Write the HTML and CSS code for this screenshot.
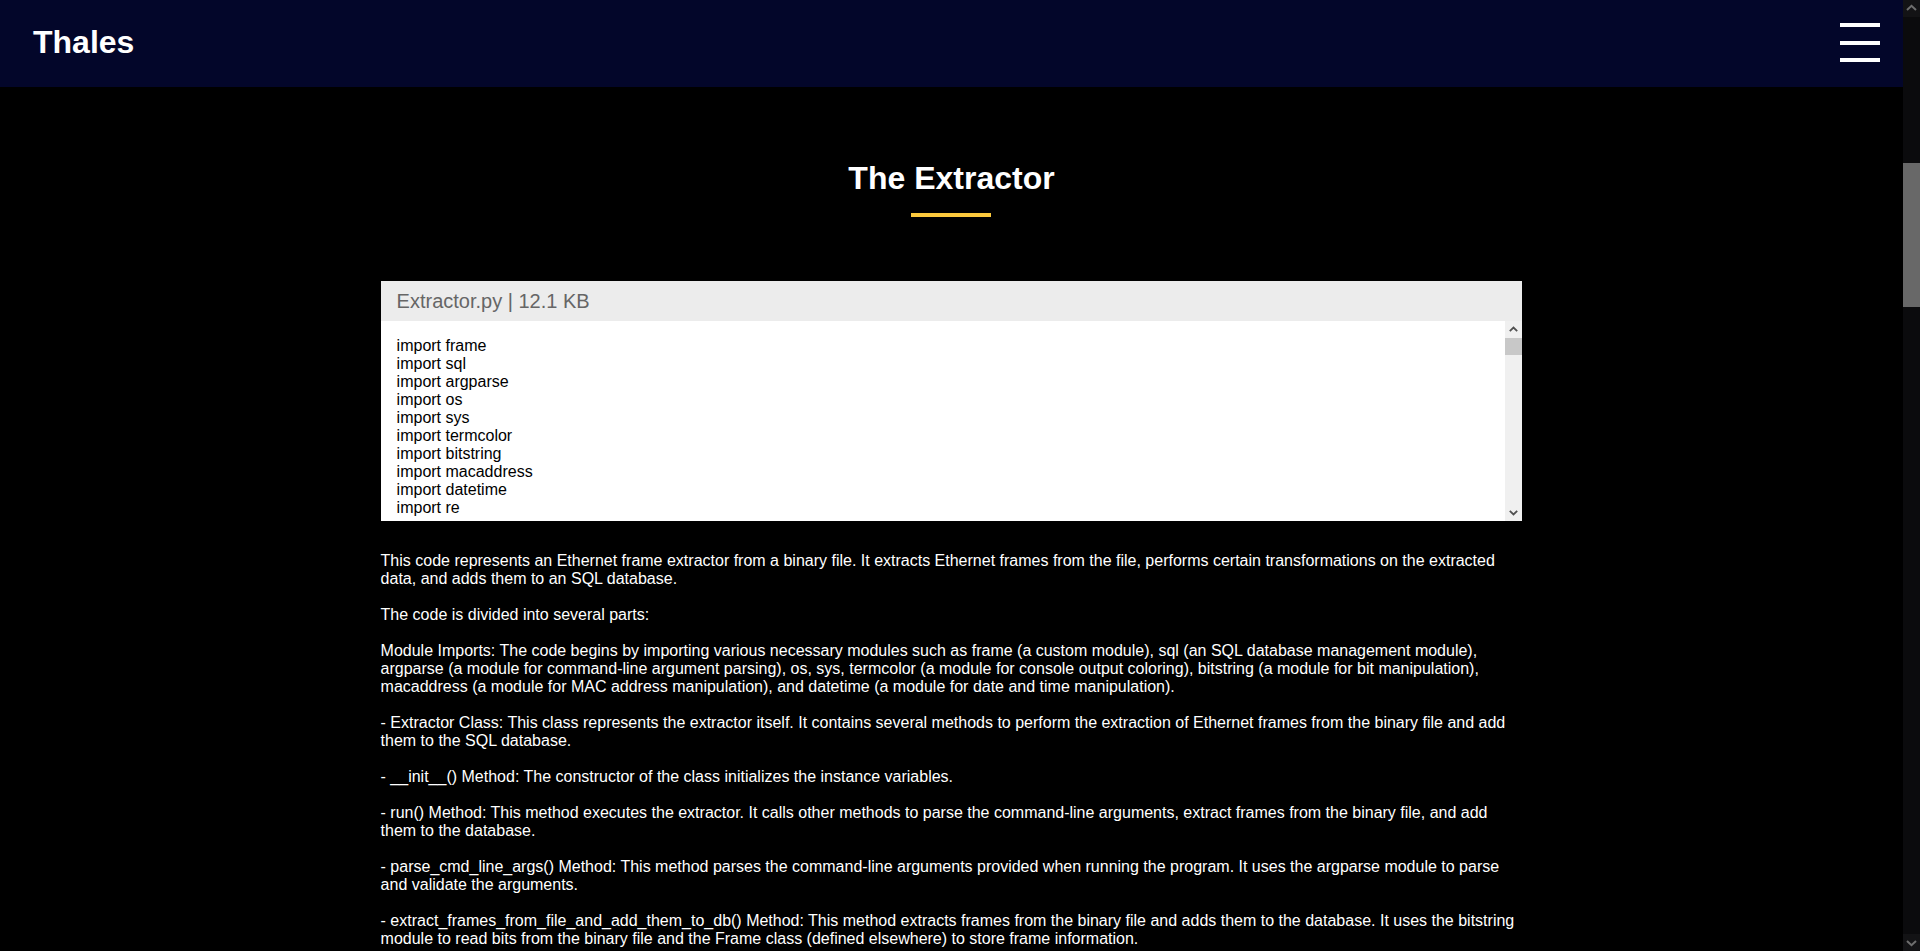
FILE: index.html
```html
<!DOCTYPE html>
<html lang="en">
<head>
<meta charset="utf-8">
<title>The Extractor - Thales</title>
<link rel="stylesheet" href="styles.css">
</head>
<body>
<div class="viewport">
  <header class="topbar">
    <div class="brand">Thales</div>
    <button class="burger" aria-label="Menu"><span></span><span></span><span></span></button>
  </header>

  <main class="page">
    <h1 class="title">The Extractor</h1>
    <div class="title-rule"></div>

    <section class="file">
      <div class="file-head">Extractor.py | 12.1 KB</div>
      <div class="code-wrap">
        <div class="code">import frame
import sql
import argparse
import os
import sys
import termcolor
import bitstring
import macaddress
import datetime
import re
</div>
        <div class="code-rail">
          <div class="crail-btn"><svg width="17" height="17" viewBox="0 0 17 17"><path d="M4.8 10.2 L8.5 6.6 L12.2 10.2" fill="none" stroke="#505050" stroke-width="1.8"/></svg></div>
          <div class="crail-track"><div class="crail-thumb"></div></div>
          <div class="crail-btn"><svg width="17" height="17" viewBox="0 0 17 17"><path d="M4.8 6.8 L8.5 10.4 L12.2 6.8" fill="none" stroke="#505050" stroke-width="1.8"/></svg></div>
        </div>
      </div>
    </section>

    <article class="desc">
      <p>This code represents an Ethernet frame extractor from a binary file. It extracts Ethernet frames from the file, performs certain transformations on the extracted data, and adds them to an SQL database.</p>
      <p>The code is divided into several parts:</p>
      <p>Module Imports: The code begins by importing various necessary modules such as frame (a custom module), sql (an SQL database management module), argparse (a module for command-line argument parsing), os, sys, termcolor (a module for console output coloring), bitstring (a module for bit manipulation), macaddress (a module for MAC address manipulation), and datetime (a module for date and time manipulation).</p>
      <p>- Extractor Class: This class represents the extractor itself. It contains several methods to perform the extraction of Ethernet frames from the binary file and add them to the SQL database.</p>
      <p>- __init__() Method: The constructor of the class initializes the instance variables.</p>
      <p>- run() Method: This method executes the extractor. It calls other methods to parse the command-line arguments, extract frames from the binary file, and add them to the database.</p>
      <p>- parse_cmd_line_args() Method: This method parses the command-line arguments provided when running the program. It uses the argparse module to parse and validate the arguments.</p>
      <p>- extract_frames_from_file_and_add_them_to_db() Method: This method extracts frames from the binary file and adds them to the database. It uses the bitstring module to read bits from the binary file and the Frame class (defined elsewhere) to store frame information.</p>
      <p>- read_mac() Method: This method reads six bytes from the bit stream and converts them into a readable MAC address using the macaddress module.</p>
      <p>Finally, the main block creates an instance of the Extractor class and calls its run() method to start the extraction.</p>
    </article>
  </main>
</div>

<div class="rail" aria-hidden="true">
  <div class="rail-btn"><svg width="17" height="17" viewBox="0 0 17 17"><path d="M4 10 L8.5 5.8 L13 10" fill="none" stroke="#6e6e6e" stroke-width="2"/></svg></div>
  <div class="rail-track"><div class="rail-thumb"></div></div>
  <div class="rail-btn"><svg width="17" height="17" viewBox="0 0 17 17"><path d="M4 7 L8.5 11.2 L13 7" fill="none" stroke="#6e6e6e" stroke-width="2"/></svg></div>
</div>
</body>
</html>
```

FILE: styles.css
```css
html {
  background: #000;
  scrollbar-width: none;
}

body {
  margin: 0;
  background: #000;
  color: #fff;
  font-family: "Liberation Sans", Arial, sans-serif;
  display: flex;
  align-items: flex-start;
}

.viewport {
  flex: 1;
  min-width: 0;
}

/* page scrollbar (drawn) */
.rail {
  flex: none;
  width: 17px;
  height: 100vh;
  position: sticky;
  top: 0;
  display: flex;
  flex-direction: column;
  background: #0b0b0d;
}

.rail-btn {
  height: 17px;
  flex: none;
  background: #131315;
}

.rail-btn svg {
  display: block;
}

.rail-track {
  flex: 1;
  padding-top: 146px;
}

.rail-thumb {
  height: 144px;
  background: #686868;
}

/* header */
.topbar {
  height: 87px;
  background: #03062a;
  display: flex;
  align-items: center;
  justify-content: space-between;
  padding: 0 23px 0 33px;
  box-sizing: border-box;
}

.brand {
  font-size: 32px;
  font-weight: bold;
  line-height: 37px;
  color: #fff;
  margin-top: -2px;
}

.burger {
  width: 40px;
  padding: 0;
  margin: 0 0 2px;
  border: 0;
  background: transparent;
  display: flex;
  flex-direction: column;
  gap: 13.5px;
  cursor: pointer;
}

.burger span {
  display: block;
  height: 4px;
  background: #fff;
}

/* content */
.page {
  width: 60%;
  margin: 0 auto;
  padding: 73px 0 60px;
}

.title {
  margin: 0;
  text-align: center;
  font-size: 32px;
  line-height: 37px;
  font-weight: bold;
}

.title-rule {
  width: 80px;
  height: 4px;
  margin: 16px auto 0;
  background: #fcc93c;
}

.file {
  margin-top: 64px;
  background: #fff;
}

.file-head {
  height: 40px;
  line-height: 40px;
  padding: 0 16px;
  background: #ececec;
  color: #666;
  font-size: 20px;
}

.code-wrap {
  height: 200px;
  display: flex;
}

.code {
  flex: 1;
  min-width: 0;
  box-sizing: border-box;
  padding: 15.5px 16px 0;
  overflow: hidden;
  white-space: pre;
  color: #000;
  font-size: 16px;
  line-height: 18px;
}

.code-rail {
  flex: none;
  width: 17px;
  display: flex;
  flex-direction: column;
  background: #f0f0f0;
}

.crail-btn {
  height: 17px;
  flex: none;
}

.crail-btn svg {
  display: block;
}

.crail-track {
  flex: 1;
}

.crail-thumb {
  height: 17px;
  background: #c8c8c8;
}

.desc {
  margin-top: 31px;
  font-size: 16px;
  line-height: 18px;
}

.desc p {
  margin: 0 0 18px;
}
```
